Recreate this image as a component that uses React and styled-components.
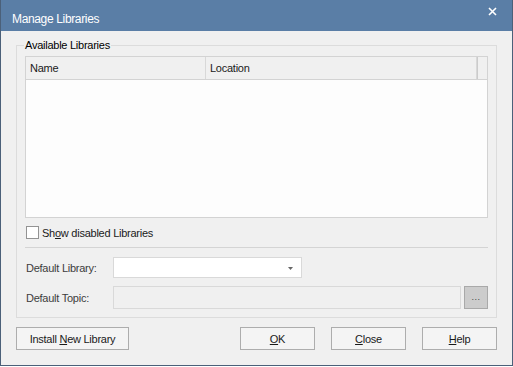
import React from 'react'
import styled, { createGlobalStyle } from 'styled-components'

const GlobalStyle = createGlobalStyle`
  html, body {
    margin: 0;
    padding: 0;
    background: #ffffff;
  }
  body {
    font-family: "Liberation Sans", Arial, sans-serif;
  }
`

const App = () => {
  return (
    <>
      <GlobalStyle />
      <Window>
        <TitleBar>
          <Title>Manage Libraries</Title>
          <CloseIcon width="9" height="9" viewBox="0 0 9 9">
            <path d="M1 1 L8 8 M8 1 L1 8" stroke="#ffffff" strokeWidth="1.6" />
          </CloseIcon>
        </TitleBar>
        <Body>
          <GroupBox>
            <Legend>Available Libraries</Legend>
            <ListView>
              <ListHeader>
                <HeaderCell width={180}>Name</HeaderCell>
                <HeaderCell width={271}>Location</HeaderCell>
                <HeaderFiller />
              </ListHeader>
            </ListView>
            <CheckRow>
              <CheckBox />
              <Label>
                Sh<Mnemonic>o</Mnemonic>w disabled Libraries
              </Label>
            </CheckRow>
            <Separator />
            <FieldRow>
              <FieldLabel>Default Library:</FieldLabel>
              <ComboBox>
                <svg width="5" height="3" viewBox="0 0 5 3">
                  <path d="M0 0 H5 L2.5 3 Z" fill="#666666" />
                </svg>
              </ComboBox>
            </FieldRow>
            <FieldRow spaced>
              <FieldLabel>Default Topic:</FieldLabel>
              <TextField />
              <BrowseButton>...</BrowseButton>
            </FieldRow>
          </GroupBox>
          <ButtonRow>
            <Button wide>
              <span>
                Install <Mnemonic>N</Mnemonic>ew Library
              </span>
            </Button>
            <Spacer />
            <Button>
              <span>
                <Mnemonic>O</Mnemonic>K
              </span>
            </Button>
            <Button>
              <span>
                <Mnemonic>C</Mnemonic>lose
              </span>
            </Button>
            <Button>
              <span>
                <Mnemonic>H</Mnemonic>elp
              </span>
            </Button>
          </ButtonRow>
        </Body>
      </Window>
    </>
  )
}

export default App

const Window = styled.div`
  width: 513px;
  height: 366px;
  box-sizing: border-box;
  border: 1px solid #4b6079;
  border-top: none;
  display: flex;
  flex-direction: column;
  background: #f0f0f0;
`

const TitleBar = styled.div`
  height: 31px;
  flex: none;
  background: #5a7ea6;
  display: flex;
  align-items: center;
  justify-content: space-between;
  padding: 4px 15px 0 11px;
  box-sizing: border-box;
`

const Title = styled.span`
  color: #ffffff;
  font-size: 12px;
  letter-spacing: -0.35px;
  margin-top: 2px;
`

const CloseIcon = styled.svg`
  margin-top: -12px;
  display: block;
`

const Body = styled.div`
  flex: 1;
  display: flex;
  flex-direction: column;
  padding: 8px 15px 0 15px;
`

const GroupBox = styled.fieldset`
  margin: 0;
  padding: 4px 8px 8px 8px;
  border: 1px solid #dcdcdc;
  display: flex;
  flex-direction: column;
  min-width: 0;
`

const Legend = styled.legend`
  padding: 0 1px;
  margin-left: -1px;
  font-size: 11px;
  line-height: 13px;
  letter-spacing: -0.25px;
  color: #000000;
`

const ListView = styled.div`
  height: 162px;
  box-sizing: border-box;
  border: 1px solid #d3d3d3;
  background: #fdfdfd;
`

const ListHeader = styled.div`
  height: 23px;
  box-sizing: border-box;
  border-bottom: 1px solid #d3d3d3;
  background: #f0f0f0;
  display: flex;
`

const HeaderCell = styled.div`
  width: ${(props) => props.width}px;
  flex: none;
  box-sizing: border-box;
  border-right: 1px solid #d8d8d8;
  padding: 0 4px;
  display: flex;
  align-items: center;
  font-size: 11px;
  letter-spacing: -0.25px;
  color: #1a1a1a;
`

const HeaderFiller = styled.div`
  flex: 1;
  border-left: 1px solid #cbcbcb;
`

const CheckRow = styled.div`
  display: flex;
  align-items: center;
  gap: 3px;
  margin-top: 8px;
  padding-left: 1px;
  height: 13px;
`

const CheckBox = styled.span`
  width: 13px;
  height: 13px;
  box-sizing: border-box;
  border: 1px solid #939393;
  background: #ffffff;
  flex: none;
`

const Label = styled.span`
  font-size: 11px;
  letter-spacing: -0.25px;
  color: #1a1a1a;
`

const Mnemonic = styled.u`
  text-decoration-thickness: 1px;
  text-underline-offset: 1px;
`

const Separator = styled.div`
  height: 1px;
  background: #d4d4d4;
  margin-top: 8px;
`

const FieldRow = styled.div`
  display: flex;
  align-items: center;
  margin-top: ${(props) => (props.spaced ? '8px' : '9px')};
`

const FieldLabel = styled.span`
  width: 87px;
  flex: none;
  padding-left: 1px;
  font-size: 11px;
  letter-spacing: -0.25px;
  color: #3c3c3c;
`

const ComboBox = styled.div`
  width: 189px;
  height: 21px;
  box-sizing: border-box;
  border: 1px solid #d9d9d9;
  background: #ffffff;
  display: flex;
  align-items: center;
  justify-content: flex-end;
  padding-right: 8px;

  svg {
    display: block;
    margin-top: 1px;
  }
`

const TextField = styled.div`
  width: 348px;
  height: 23px;
  box-sizing: border-box;
  border: 1px solid #d9d9d9;
  background: #f0f0f0;
`

const BrowseButton = styled.div`
  width: 24px;
  height: 23px;
  margin-left: 3px;
  box-sizing: border-box;
  border: 1px solid #a9a9a9;
  background: #cccccc;
  display: flex;
  align-items: flex-end;
  justify-content: center;
  padding-bottom: 6px;
  font-size: 9px;
  line-height: 9px;
  letter-spacing: 0.5px;
  color: #444444;
`

const ButtonRow = styled.div`
  display: flex;
  gap: 16px;
  margin-top: 9px;
`

const Spacer = styled.div`
  flex: 1;
`

const Button = styled.div`
  width: ${(props) => (props.wide ? '113px' : '75px')};
  height: 23px;
  box-sizing: border-box;
  border: 1px solid #adadad;
  background: #f4f4f4;
  display: flex;
  align-items: center;
  justify-content: center;
  font-size: 11px;
  letter-spacing: -0.25px;
  color: #1a1a1a;
`
